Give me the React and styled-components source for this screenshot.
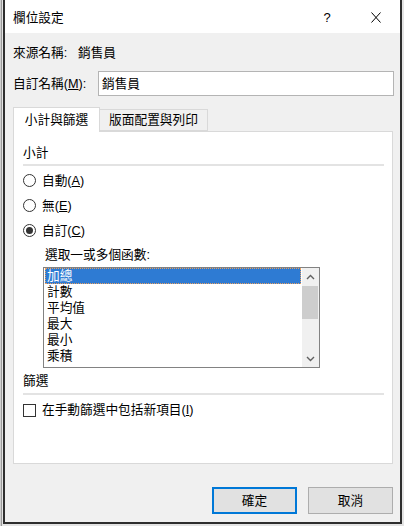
import React from 'react';
import styled, { createGlobalStyle } from 'styled-components';

const GlobalStyle = createGlobalStyle`
  html, body {
    margin: 0;
    padding: 0;
    background: #d6d6d6;
  }
  body {
    font-family: 'Liberation Sans', 'Noto Sans CJK TC', sans-serif;
    font-size: 12.7px;
    line-height: 16px;
    color: #000;
  }
  * {
    box-sizing: border-box;
  }
`;

const Page = styled.div`
  width: 404px;
  height: 526px;
  padding-left: 3px;
  background: linear-gradient(to right, #cfcfcf 0, #cfcfcf 1px, #9a9a9a 1px, #9a9a9a 2px, #e4e4e4 2px);
`;

const Dialog = styled.div`
  width: 399px;
  height: 524px;
  border: 2px solid #2e2e2e;
  border-top: none;
  background: #f0f0f0;
  display: flex;
  flex-direction: column;
`;

const TitleBar = styled.div`
  height: 33px;
  flex: none;
  background: #fff;
  display: flex;
  align-items: center;
  padding-left: 8px;
  padding-top: 2px;
`;

const TitleText = styled.div`
  flex: 1;
`;

const HelpButton = styled.div`
  width: 12px;
  font-size: 13px;
  margin-right: 38px;
  text-align: center;
`;

const CloseButton = styled.div`
  width: 10px;
  height: 11px;
  margin-right: 19px;
  display: flex;
`;

const Body = styled.div`
  flex: 1;
  display: flex;
  flex-direction: column;
  padding: 0 6px 8px 8px;
`;

const FieldRow = styled.div`
  display: flex;
  align-items: center;
  height: ${p => p.$height || 16}px;
  margin-top: ${p => p.$top || 0}px;
`;

const FieldLabel = styled.div`
  width: ${p => p.$width}px;
  flex: none;
  white-space: nowrap;
`;

const TextBox = styled.div`
  flex: 1;
  height: 25px;
  border: 1px solid #b4b4b4;
  background: #fff;
  display: flex;
  align-items: center;
  padding-left: 3px;
`;

const TabStrip = styled.div`
  display: flex;
  align-items: flex-end;
  height: 24px;
  margin-top: 11px;
  position: relative;
  z-index: 1;
`;

const Tab = styled.div`
  width: ${p => p.$width}px;
  height: ${p => (p.$active ? 25 : 22)}px;
  margin-bottom: ${p => (p.$active ? -1 : 0)}px;
  margin-left: ${p => (p.$active ? 0 : -1)}px;
  border: 1px solid #d9d9d9;
  border-bottom: ${p => (p.$active ? 'none' : '1px solid #d9d9d9')};
  background: ${p => (p.$active ? '#fff' : '#f0f0f0')};
  display: flex;
  align-items: center;
  justify-content: center;
  padding-bottom: ${p => (p.$active ? 1 : 0)}px;
  white-space: nowrap;
`;

const Panel = styled.div`
  height: 333px;
  margin-right: 1px;
  border: 1px solid #d9d9d9;
  background: #fff;
  display: flex;
  flex-direction: column;
  padding: 0 8px 0 9px;
`;

const SectionTitle = styled.div`
  height: 16px;
  margin-top: ${p => p.$top}px;
`;

const Divider = styled.div`
  height: 2px;
  margin-top: ${p => p.$top}px;
  background: #e3e3e3;
`;

const OptionRow = styled.div`
  display: flex;
  align-items: center;
  height: ${p => p.$height || 25}px;
  margin-top: ${p => p.$top || 0}px;
`;

const RadioCircle = styled.div`
  width: 13px;
  height: 13px;
  border: 1px solid #333;
  border-radius: 50%;
  background: #fff;
  margin-right: 6px;
  display: flex;
  align-items: center;
  justify-content: center;
  flex: none;
`;

const RadioDot = styled.div`
  width: 7px;
  height: 7px;
  border-radius: 50%;
  background: #333;
`;

const CheckBox = styled.div`
  width: 13px;
  height: 13px;
  border: 1px solid #333;
  background: #fff;
  margin-right: 6px;
  flex: none;
`;

const Caption = styled.div`
  height: 16px;
  margin-top: 4px;
  padding-left: 22px;
`;

const ListBox = styled.div`
  width: 277px;
  height: 101px;
  margin-top: 4px;
  margin-left: 20px;
  border: 1px solid #828282;
  background: #fff;
  display: flex;
`;

const ListItems = styled.div`
  flex: 1;
  padding: 0 1px;
  overflow: hidden;
`;

const ListItem = styled.div`
  height: 16px;
  display: flex;
  align-items: center;
  padding-left: 2px;
  background: ${p => (p.$selected ? '#2e7bd3' : 'transparent')};
  color: ${p => (p.$selected ? '#fff' : '#000')};
  outline: ${p => (p.$selected ? '1px dotted #e8a060' : 'none')};
  outline-offset: -1px;
`;

const ScrollBar = styled.div`
  width: 17px;
  flex: none;
  background: #f0f0f0;
  display: flex;
  flex-direction: column;
`;

const ScrollArrow = styled.div`
  height: 17px;
  display: flex;
  align-items: center;
  justify-content: center;
`;

const ScrollTrack = styled.div`
  flex: 1;
  padding-top: 1px;
`;

const ScrollThumb = styled.div`
  height: 33px;
  margin: 0 1px 0 0;
  background: #cdcdcd;
`;

const Footer = styled.div`
  display: flex;
  justify-content: flex-end;
  gap: 11px;
  margin-top: 23px;
  padding-right: 1px;
`;

const Button = styled.div`
  width: 85px;
  height: 27px;
  display: flex;
  align-items: center;
  justify-content: center;
  background: #e1e1e1;
  border: ${p => (p.$primary ? '2px solid #0078d7' : '1px solid #adadad')};
`;

const Chevron = ({ up }) => (
  <svg width="9" height="6" viewBox="0 0 9 6">
    <path
      d={up ? 'M1 5 L4.5 1.5 L8 5' : 'M1 1 L4.5 4.5 L8 1'}
      fill="none"
      stroke="#606060"
      strokeWidth="1.4"
    />
  </svg>
);

const functions = ['加總', '計數', '平均值', '最大', '最小', '乘積'];

export default function App() {
  return (
    <>
      <GlobalStyle />
      <Page>
        <Dialog>
          <TitleBar>
            <TitleText>欄位設定</TitleText>
            <HelpButton>?</HelpButton>
            <CloseButton>
              <svg width="10" height="11" viewBox="0 0 10 11">
                <path d="M0.5 0.5 L9.5 10.5 M9.5 0.5 L0.5 10.5" stroke="#000" strokeWidth="1" fill="none" />
              </svg>
            </CloseButton>
          </TitleBar>
          <Body>
            <FieldRow $top={12}>
              <FieldLabel $width={65}>來源名稱:</FieldLabel>
              <span>銷售員</span>
            </FieldRow>
            <FieldRow $top={10} $height={25}>
              <FieldLabel $width={85}>自訂名稱(<u>M</u>):</FieldLabel>
              <TextBox>銷售員</TextBox>
            </FieldRow>
            <TabStrip>
              <Tab $active $width={87}>小計與篩選</Tab>
              <Tab $width={109}>版面配置與列印</Tab>
            </TabStrip>
            <Panel>
              <SectionTitle $top={13}>小計</SectionTitle>
              <Divider $top={3} />
              <OptionRow $top={2}>
                <RadioCircle />
                <span>自動(<u>A</u>)</span>
              </OptionRow>
              <OptionRow>
                <RadioCircle />
                <span>無(<u>E</u>)</span>
              </OptionRow>
              <OptionRow>
                <RadioCircle>
                  <RadioDot />
                </RadioCircle>
                <span>自訂(<u>C</u>)</span>
              </OptionRow>
              <Caption>選取一或多個函數:</Caption>
              <ListBox>
                <ListItems>
                  {functions.map((name, i) => (
                    <ListItem key={`fn-${name}`} $selected={i === 0}>
                      {name}
                    </ListItem>
                  ))}
                </ListItems>
                <ScrollBar>
                  <ScrollArrow>
                    <Chevron up />
                  </ScrollArrow>
                  <ScrollTrack>
                    <ScrollThumb />
                  </ScrollTrack>
                  <ScrollArrow>
                    <Chevron />
                  </ScrollArrow>
                </ScrollBar>
              </ListBox>
              <SectionTitle $top={5}>篩選</SectionTitle>
              <Divider $top={4} />
              <OptionRow $top={5} $height={20}>
                <CheckBox />
                <span>在手動篩選中包括新項目(<u>I</u>)</span>
              </OptionRow>
            </Panel>
            <Footer>
              <Button $primary>確定</Button>
              <Button>取消</Button>
            </Footer>
          </Body>
        </Dialog>
      </Page>
    </>
  );
}
